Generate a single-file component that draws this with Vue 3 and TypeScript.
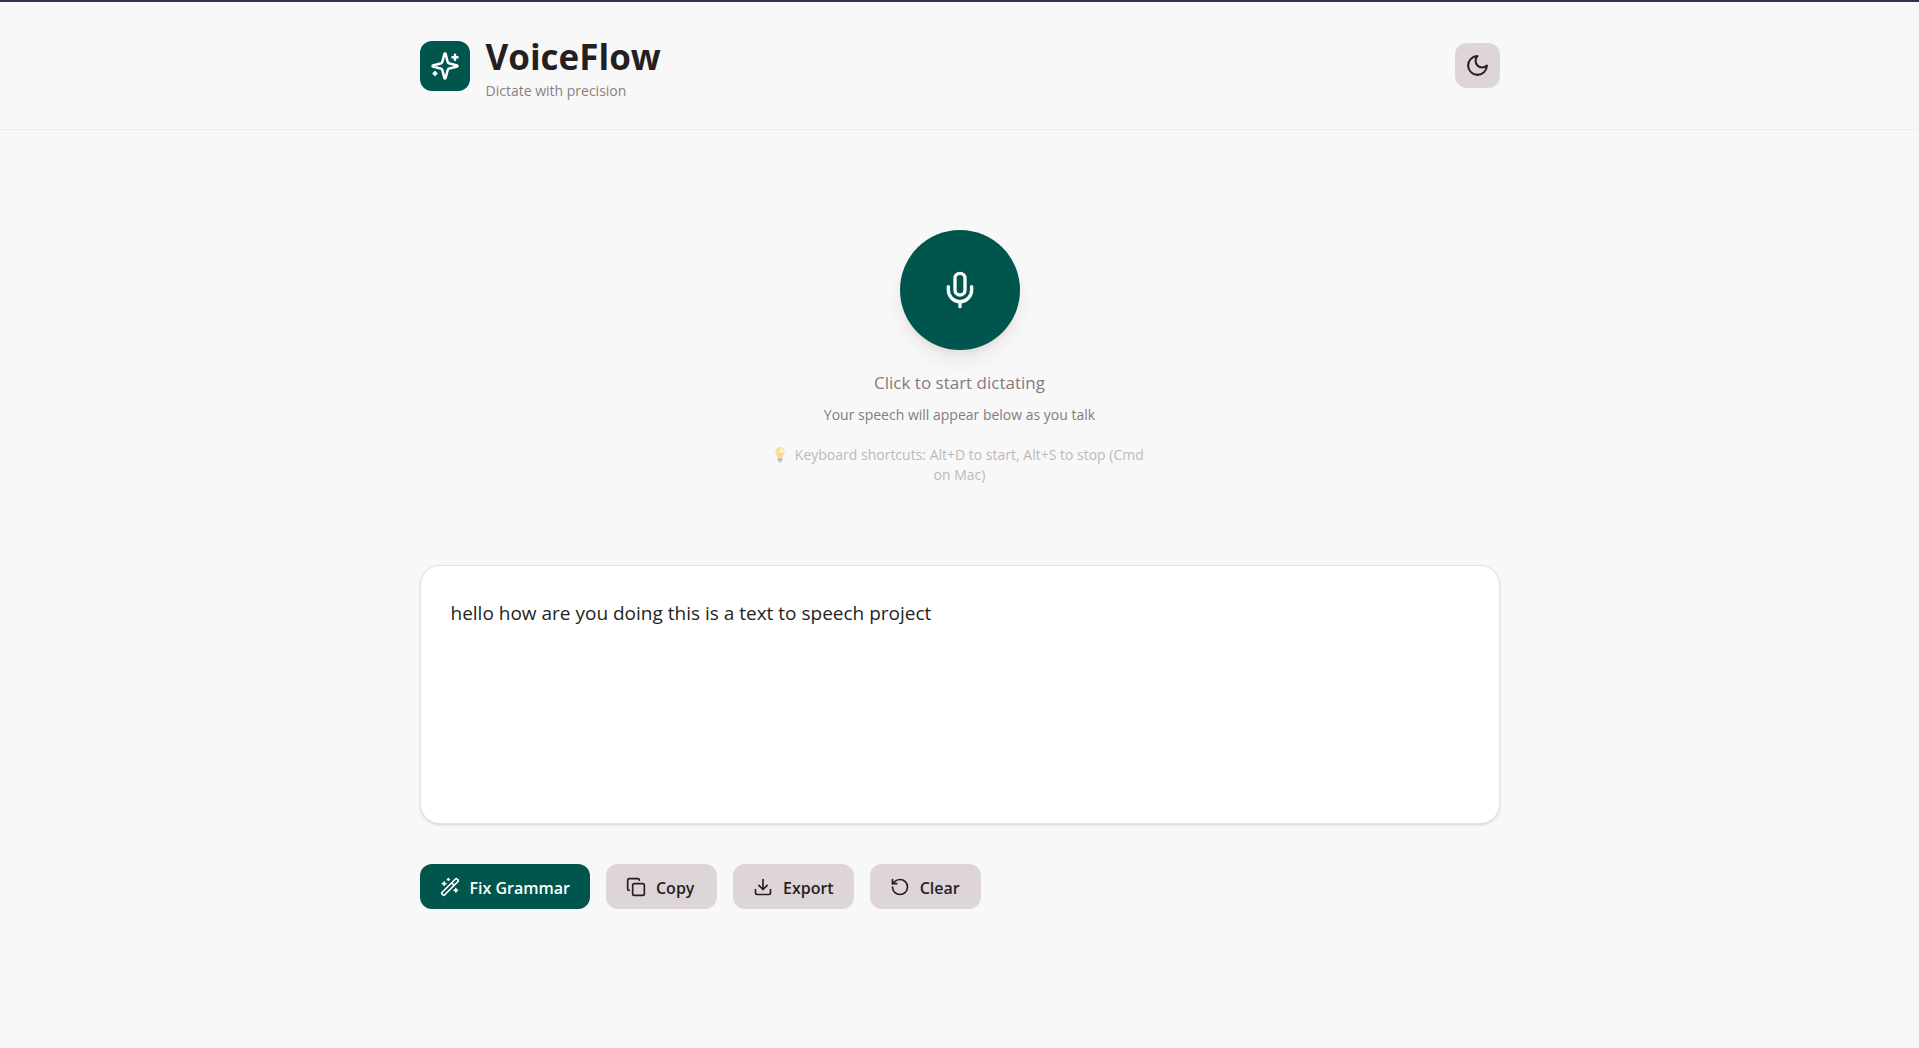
<script setup lang="ts">
import { ref } from 'vue'

interface Action {
  label: string
  primary?: boolean
  paths: string[]
}

const transcript = ref('hello how are you doing this is a text to speech project')

const actions: Action[] = [
  {
    label: 'Fix Grammar',
    primary: true,
    paths: [
      'm21.64 3.64-1.28-1.28a1.21 1.21 0 0 0-1.72 0L2.36 18.64a1.21 1.21 0 0 0 0 1.72l1.28 1.28a1.2 1.2 0 0 0 1.72 0L21.64 5.36a1.2 1.2 0 0 0 0-1.72',
      'm14 7 3 3', 'M5 6v4', 'M19 14v4', 'M10 2v2', 'M7 8H3', 'M21 16h-4', 'M11 3H9',
    ],
  },
  {
    label: 'Copy',
    paths: [
      'M10 8h10a2 2 0 0 1 2 2v10a2 2 0 0 1-2 2H10a2 2 0 0 1-2-2V10a2 2 0 0 1 2-2Z',
      'M4 16c-1.1 0-2-.9-2-2V4c0-1.1.9-2 2-2h10c1.1 0 2 .9 2 2',
    ],
  },
  {
    label: 'Export',
    paths: ['M21 15v4a2 2 0 0 1-2 2H5a2 2 0 0 1-2-2v-4', 'm7 10 5 5 5-5', 'M12 15V3'],
  },
  {
    label: 'Clear',
    paths: ['M3 12a9 9 0 1 0 9-9 9.75 9.75 0 0 0-6.74 2.74L3 8', 'M3 3v5h5'],
  },
]
</script>

<template>
  <div class="page">
    <header class="header">
      <div class="container bar">
        <div class="brand">
          <span class="logo">
            <svg class="icon icon-lg" viewBox="0 0 24 24" aria-hidden="true">
              <path d="M9.937 15.5A2 2 0 0 0 8.5 14.063l-6.135-1.582a.5.5 0 0 1 0-.962L8.5 9.936A2 2 0 0 0 9.937 8.5l1.582-6.135a.5.5 0 0 1 .963 0L14.063 8.5A2 2 0 0 0 15.5 9.937l6.135 1.581a.5.5 0 0 1 0 .964L15.5 14.063a2 2 0 0 0-1.437 1.437l-1.582 6.135a.5.5 0 0 1-.963 0z" />
              <path d="M20 3v4M22 5h-4M4 17v2M5 18H3" />
            </svg>
          </span>
          <div class="names">
            <h1>VoiceFlow</h1>
            <p>Dictate with precision</p>
          </div>
        </div>
        <button class="theme" type="button" aria-label="Toggle theme">
          <svg class="icon icon-md" viewBox="0 0 24 24" aria-hidden="true">
            <path d="M12 3a6 6 0 0 0 9 9 9 9 0 1 1-9-9Z" />
          </svg>
        </button>
      </div>
    </header>

    <main class="container main">
      <section class="recorder">
        <button class="mic" type="button" aria-label="Start dictating">
          <svg class="icon icon-xl" viewBox="0 0 24 24" aria-hidden="true">
            <rect x="9" y="2" width="6" height="13" rx="3" />
            <path d="M19 10v2a7 7 0 0 1-14 0v-2M12 19v3" />
          </svg>
        </button>
        <p class="lead">Click to start dictating</p>
        <p class="sub">Your speech will appear below as you talk</p>
        <p class="hint">
          <svg class="bulb" viewBox="0 0 10 16" aria-hidden="true">
            <path d="M5 0a4.7 4.7 0 0 1 4.7 4.7c0 2.4-2 3.4-2.4 6.3H2.700C2.300 8.100.3 7.100.3 4.700A4.700 4.700 0 0 1 5 0Z" fill="#ffc83d" />
            <path d="M5.500 1.300a3.200 3.200 0 0 1 3 3.200c0 1.500-1.500 2-2.500 1.500S4.300 2 5.500 1.300Z" fill="#fff3b0" />
            <path d="m3.800 10.500-.8-4 2 1.500 2-1.500-.8 4" fill="none" stroke="#f59f23" stroke-width=".8" />
            <path d="M2.700 11h4.600v2.500L6.200 15.500H3.800L2.700 13.500Z" fill="#9b9b9b" />
            <path d="M2.700 12.500h4.600" stroke="#6f6f6f" stroke-width=".8" />
          </svg>
          Keyboard shortcuts: Alt+D to start, Alt+S to stop (Cmd on Mac)
        </p>
      </section>

      <textarea v-model="transcript" class="transcript" aria-label="Transcript" spellcheck="false"></textarea>

      <div class="actions">
        <button v-for="a in actions" :key="a.label" type="button" class="action" :class="{ primary: a.primary }">
          <svg class="icon icon-sm" viewBox="0 0 24 24" aria-hidden="true">
            <path v-for="d in a.paths" :key="d" :d="d" />
          </svg>
          <span>{{ a.label }}</span>
        </button>
      </div>
    </main>
  </div>
</template>

<style>
body {
  margin: 0;
  background: #f8f8f8;
}
</style>

<style scoped>
.page {
  box-sizing: border-box;
  min-height: 100vh;
  border-top: 2px solid #30344a;
  background: #f8f8f8;
  color: #261f22;
  font-family: "Segoe UI", "Open Sans", "Noto Sans", sans-serif;
}

.container {
  box-sizing: border-box;
  width: 100%;
  max-width: 1140px;
  margin: 0 auto;
  padding: 0 30px;
}

h1,
p {
  margin: 0;
}

button {
  border: 0;
  padding: 0;
  font: inherit;
  color: inherit;
  cursor: pointer;
}

.icon {
  flex: none;
  fill: none;
  stroke: currentColor;
  stroke-width: 2;
  stroke-linecap: round;
  stroke-linejoin: round;
}

.icon-sm { width: 20px; height: 20px; }
.icon-md { width: 25px; height: 25px; }
.icon-lg { width: 30px; height: 30px; }
.icon-xl { width: 40px; height: 40px; }

.header {
  padding: 28px 0;
  border-bottom: 1px solid #efedee;
}

.bar {
  display: flex;
  align-items: center;
  justify-content: space-between;
}

.brand {
  display: flex;
  align-items: center;
  gap: 16px;
}

.logo {
  display: grid;
  place-items: center;
  width: 50px;
  height: 50px;
  border-radius: 12px;
  background: #00554d;
  color: #fff;
}

.names {
  display: flex;
  flex-direction: column;
  gap: 2px;
  padding-top: 4px;
}

h1 {
  font-size: 35px;
  line-height: 45px;
  font-weight: 700;
}

.names p {
  color: #8a7f84;
  font-size: 14px;
  line-height: 20px;
}

.theme {
  display: grid;
  place-items: center;
  width: 45px;
  height: 45px;
  border-radius: 12px;
  background: #ded5d9;
}

.main {
  padding-top: 100px;
  padding-bottom: 80px;
}

.recorder {
  display: flex;
  flex-direction: column;
  align-items: center;
  text-align: center;
  margin-bottom: 80px;
  color: #857a7e;
}

.mic {
  display: grid;
  place-items: center;
  width: 120px;
  height: 120px;
  margin-bottom: 18px;
  border-radius: 50%;
  background: #00554d;
  color: #fff;
  box-shadow: 0 12px 20px -4px rgb(90 30 50 / 10%), 0 4px 8px -4px rgb(90 30 50 / 10%);
}

.lead {
  font-size: 17px;
  line-height: 30px;
  margin-bottom: 7px;
}

.sub {
  font-size: 14px;
  line-height: 20px;
  margin-bottom: 20px;
}

.hint {
  max-width: 384px;
  font-size: 14px;
  line-height: 20px;
  opacity: 0.5;
}

.bulb {
  width: 10px;
  height: 16px;
  margin-right: 6px;
  vertical-align: -3px;
}

.transcript {
  display: block;
  box-sizing: border-box;
  width: 100%;
  height: 259px;
  padding: 30px;
  border: 1px solid #e8e2e4;
  border-radius: 20px;
  outline: 0;
  resize: none;
  background: #fff;
  color: #261f22;
  font-family: inherit;
  font-size: 19px;
  line-height: 34px;
  box-shadow: 0 1px 3px rgb(60 20 35 / 12%), 0 1px 2px -1px rgb(60 20 35 / 12%);
}

.actions {
  display: flex;
  flex-wrap: wrap;
  gap: 16px;
  margin-top: 40px;
}

.action {
  display: flex;
  align-items: center;
  gap: 10px;
  min-width: 111px;
  height: 45px;
  padding: 0 20px;
  border-radius: 12px;
  background: #ded5d9;
  font-size: 16px;
  font-weight: 600;
}

.action span {
  padding-top: 2px;
}

.primary {
  background: #00554d;
  color: #fff;
}
</style>
